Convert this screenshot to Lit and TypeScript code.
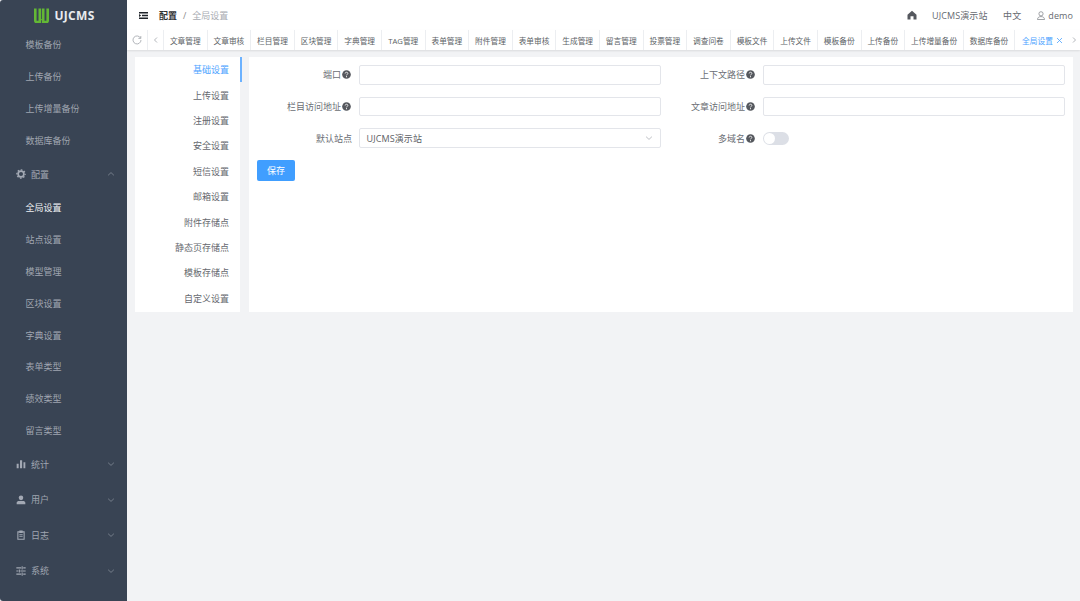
import { LitElement, html, css, svg } from "lit";
import { customElement } from "lit/decorators.js";

const chevron = (up = false) => html`<svg class="chev" viewBox="0 0 8 8" width="8" height="8"><path d=${up ? "M1.100 5.300 4 2.600l2.900 2.700" : "M1.100 2.700 4 5.400l2.900-2.700"} fill="none" stroke="currentColor" stroke-width=".75"/></svg>`;

const icons: Record<string, unknown> = {
  gear: svg`<circle cx="7.500" cy="7.500" r="4.300" fill="none" stroke="#a3a9b4" stroke-width="2.500"/><circle cx="7.500" cy="7.500" r="6.200" fill="none" stroke="#a3a9b4" stroke-width="2" stroke-dasharray="2.500 2.370" stroke-dashoffset="1.200"/>`,
  chart: svg`<path d="M1 7h3v7H1zM6 2h3.200v12H6zM11.200 5H14v9h-2.800z"/>`,
  user: svg`<circle cx="7.500" cy="4.300" r="3.400"/><path d="M1 14v-2.200C1 9.600 3 9 4.500 9h6c1.500 0 3.500.6 3.500 2.800V14z"/>`,
  log: svg`<path fill-rule="evenodd" d="M5 .8h5V2h3v12.600H2V2h3zM3.600 3.600V13h7.800V3.600H10v1H5v-1zM5 6.500h5v1.200H5zM5 9.200h5v1.200H5z"/>`,
  sliders: svg`<path d="M.5 2h7.300v1.600H.5zM10.800 2h3.700v1.600h-3.700zM8.500.5h1.500v4.600H8.500zM.5 6.700h3v1.600h-3zM6.500 6.700h8v1.600h-8zM4.300 5.200h1.500v4.600H4.300zM.5 11.400h7.300V13H.5zM10.800 11.400h3.700V13h-3.700zM8.500 9.900h1.500v4.600H8.500z"/>`,
};

const helpIcon = html`<svg class="help" viewBox="0 0 10 10" width="9" height="9"><circle cx="5" cy="5" r="4.800" fill="#55585e"/><path d="M3.500 3.900C3.600 3 4.200 2.500 5 2.500c.9 0 1.500.5 1.500 1.300 0 1.100-1.500 1.100-1.500 2.200" fill="none" stroke="#fff" stroke-width=".9"/><circle cx="5" cy="7.400" r=".6" fill="#fff"/></svg>`;

@customElement("app-root")
export class AppRoot extends LitElement {
  static styles = css`
    :host { display: block; width: 1080px; height: 601px; overflow: hidden; background: #f2f3f5; font-family: "Open Sans", "Noto Sans CJK SC", sans-serif; font-size: 9px; color: #606266; }
    .app { display: flex; height: 601px; }
    .side { width: 127px; flex: none; background: #394454; color: #a0a6b1; overflow: hidden; border-radius: 3px 0 0 3px; position: relative; }
    .logo { height: 28.500px; display: flex; align-items: center; justify-content: center; gap: 5px; color: #e8ebef; font-weight: 700; font-size: 12px; padding: 2px 0 0 2px; box-sizing: border-box; letter-spacing: .3px; }
    .logo svg { display: block; }
    .item { height: 32px; display: flex; align-items: center; padding-left: 25.500px; }
    .sub { height: 31.800px; }
    .sub.on { color: #eef0f3; }
    .group { height: 35.500px; display: flex; align-items: center; padding: 0 12.500px 0 15.500px; gap: 5.500px; }
    .group .ico { width: 10px; height: 10px; fill: #a3a9b4; flex: none; }
    .group .name { flex: 1; }
    .chev { display: block; flex: none; color: #868d99; }
    .main { flex: 1; min-width: 0; display: flex; flex-direction: column; }
    .top { height: 30px; background: #fff; display: flex; align-items: center; padding: 0 7px 0 11.500px; }
    .burger { margin-right: 11.500px; display: block; }
    .crumb-a { font-weight: 700; color: #303133; }
    .sep { margin: 0 6px; color: #888; }
    .crumb-b { color: #a8abb2; }
    .spacer { flex: 1; }
    .right { display: flex; align-items: center; color: #666a70; letter-spacing: .1px; }
    .right svg { display: block; }
    .home { margin-right: 15.500px; }
    .site { margin-right: 15.500px; }
    .lang { margin-right: 16px; }
    .me { margin-right: 3px; }
    .tabs { height: 20px; background: #fff; display: flex; align-items: stretch; box-shadow: 0 1px 2px rgba(0,0,0,.1); position: relative; font-size: 7.700px; color: #5c5f66; }
    .tool { display: flex; align-items: center; justify-content: center; color: #a0a3a9; flex: none; border-right: 1px solid #eceef1; box-sizing: border-box; }
    .t1 { width: 21px; }
    .t2 { width: 16px; }
    .t3 { width: 13px; border: none; margin-left: auto; }
    .tab { display: flex; align-items: center; justify-content: center; width: 43.600px; flex: none; border-right: 1px solid #eceef1; box-sizing: border-box; white-space: nowrap; }
    .w2 { width: 59px; }
    .w3 { width: 51px; }
    .active { width: 52px; color: #4da3ff; border: none; gap: 3px; justify-content: flex-start; padding-left: 7px; }
    .body { display: flex; align-items: flex-start; padding: 7px 7px 0 8px; gap: 7px; }
    .nav { width: 105px; height: 255px; background: #fff; flex: none; position: relative; }
    .nav div { height: 25.400px; display: flex; align-items: center; justify-content: flex-end; padding-right: 11px; color: #65686e; }
    .nav div.on { color: #4da3ff; position: relative; }
    .nav div.on::after { content: ""; position: absolute; right: -2px; top: 0; bottom: 0; width: 2px; background: #6cb2ff; }
    .panel { flex: 1; height: 255px; background: #fff; margin-left: 2px; padding: 8px; box-sizing: border-box; }
    .form { display: grid; grid-template-columns: 1fr 1fr; row-gap: 12.100px; }
    .row { display: flex; align-items: center; height: 19.600px; }
    .label { width: 102px; flex: none; display: flex; justify-content: flex-end; align-items: center; gap: 1px; padding-right: 8px; box-sizing: border-box; color: #6b6e74; }
    .help { display: block; flex: none; }
    .plain { padding-right: 7px; }
    .input { flex: 1; height: 100%; border: 1px solid #e3e5ea; border-radius: 2px; box-sizing: border-box; display: flex; align-items: center; justify-content: space-between; padding: 0 7px 0 6.500px; color: #606266; letter-spacing: .1px; }
    .input .chev { color: #a8abb2; }
    .switch { width: 26px; height: 13px; border-radius: 7px; background: #dcdfe6; position: relative; }
    .switch::after { content: ""; position: absolute; left: 1px; top: 1px; width: 11px; height: 11px; border-radius: 50%; background: #fff; }
    .save { margin-top: 12px; width: 38px; height: 21px; background: #409eff; color: #fff; border: none; border-radius: 2px; font: inherit; padding: 0; display: block; }
  `;

  render() {
    const top = ["模板备份", "上传备份", "上传增量备份", "数据库备份"];
    const subs = ["全局设置", "站点设置", "模型管理", "区块设置", "字典设置", "表单类型", "绩效类型", "留言类型"];
    const groups = [["chart", "统计"], ["user", "用户"], ["log", "日志"], ["sliders", "系统"]];
    const tabs = ["文章管理", "文章审核", "栏目管理", "区块管理", "字典管理", "TAG管理", "表单管理", "附件管理", "表单审核", "生成管理", "留言管理", "投票管理", "调查问卷", "模板文件", "上传文件", "模板备份", "上传备份", "上传增量备份", "数据库备份"];
    const wide: Record<string, string> = { "上传增量备份": "w2", "数据库备份": "w3" };
    const nav = ["基础设置", "上传设置", "注册设置", "安全设置", "短信设置", "邮箱设置", "附件存储点", "静态页存储点", "模板存储点", "自定义设置"];
    return html`
      <div class="app">
        <aside class="side">
          <div class="logo">
            <svg width="15" height="15" viewBox="0 0 15 15"><path d="M1.300 .5v12.300c0 .7.500 1.200 1.200 1.200h3.300V3.500M5.800 3.500V.5M9.200 .5V11.500M9.200 11.500V14h3.300c.7 0 1.200-.5 1.200-1.200V.5" fill="none" stroke="#63b835" stroke-width="2.600"/><path d="M6 3v7.500c0 .8.500 1.300 1.500 1.300s1.500-.5 1.500-1.300V3" fill="none" stroke="#63b835" stroke-width="1.100"/></svg>
            <span>UJCMS</span>
          </div>
          ${top.map((t) => html`<div class="item">${t}</div>`)}
          <div class="group"><svg class="ico" viewBox="0 0 15 15">${icons.gear}</svg><span class="name">配置</span>${chevron(true)}</div>
          ${subs.map((t, i) => html`<div class="item sub ${i === 0 ? "on" : ""}">${t}</div>`)}
          ${groups.map(([ic, t]) => html`<div class="group"><svg class="ico" viewBox="0 0 15 15">${icons[ic]}</svg><span class="name">${t}</span>${chevron()}</div>`)}
        </aside>
        <main class="main">
          <header class="top">
            <svg class="burger" width="9" height="7" viewBox="0 0 9 7"><path d="M0 .75h9M3 3.500h6M0 6.250h9" stroke="#1f2329" stroke-width="1.500" fill="none"/><path d="M0 2 2.200 3.500 0 5z" fill="#1f2329"/></svg>
            <span class="crumb-a">配置</span><span class="sep">/</span><span class="crumb-b">全局设置</span>
            <span class="spacer"></span>
            <div class="right">
              <svg class="home" width="10" height="10" viewBox="0 0 10 10"><path d="M5 .8.500 4.700v4.700h3V6.300h3v3.100h3V4.700z" fill="#55585e"/></svg>
              <span class="site">UJCMS演示站</span>
              <span class="lang">中文</span>
              <svg class="me" width="8" height="9" viewBox="0 0 8 9"><circle cx="4" cy="2.800" r="2.100" fill="none" stroke="#7a7d83" stroke-width=".7"/><path d="M.5 8.500c0-2 1.500-2.900 3.500-2.900s3.500.9 3.500 2.900z" fill="none" stroke="#7a7d83" stroke-width=".7"/></svg>
              <span>demo</span>
            </div>
          </header>
          <nav class="tabs">
            <div class="tool t1"><svg width="10" height="10" viewBox="0 0 10 10"><path d="M8.600 3.200A4 4 0 1 0 9 5M8.800 1v2.400H6.400" fill="none" stroke="#a0a3a9" stroke-width=".8"/></svg></div>
            <div class="tool t2"><svg width="8" height="8" viewBox="0 0 8 8"><path d="M5 1.500 2.500 4 5 6.500" fill="none" stroke="#a0a3a9" stroke-width=".8"/></svg></div>
            ${tabs.map((t) => html`<div class="tab ${wide[t] ?? ""}">${t}</div>`)}
            <div class="tab active">全局设置<svg width="7" height="7" viewBox="0 0 7 7"><path d="M1 1l5 5M6 1 1 6" stroke="#4da3ff" stroke-width=".8"/></svg></div>
            <div class="tool t3"><svg width="8" height="8" viewBox="0 0 8 8"><path d="M3 1.500 5.500 4 3 6.500" fill="none" stroke="#a0a3a9" stroke-width=".8"/></svg></div>
          </nav>
          <div class="body">
            <div class="nav">${nav.map((t, i) => html`<div class=${i === 0 ? "on" : ""}>${t}</div>`)}</div>
            <section class="panel">
              <div class="form">
                <div class="row"><span class="label">端口${helpIcon}</span><div class="input"></div></div>
                <div class="row"><span class="label">上下文路径${helpIcon}</span><div class="input"></div></div>
                <div class="row"><span class="label">栏目访问地址${helpIcon}</span><div class="input"></div></div>
                <div class="row"><span class="label">文章访问地址${helpIcon}</span><div class="input"></div></div>
                <div class="row"><span class="label plain">默认站点</span><div class="input"><span>UJCMS演示站</span>${chevron()}</div></div>
                <div class="row"><span class="label">多域名${helpIcon}</span><div class="switch"></div></div>
              </div>
              <button class="save">保存</button>
            </section>
          </div>
        </main>
      </div>
    `;
  }
}
